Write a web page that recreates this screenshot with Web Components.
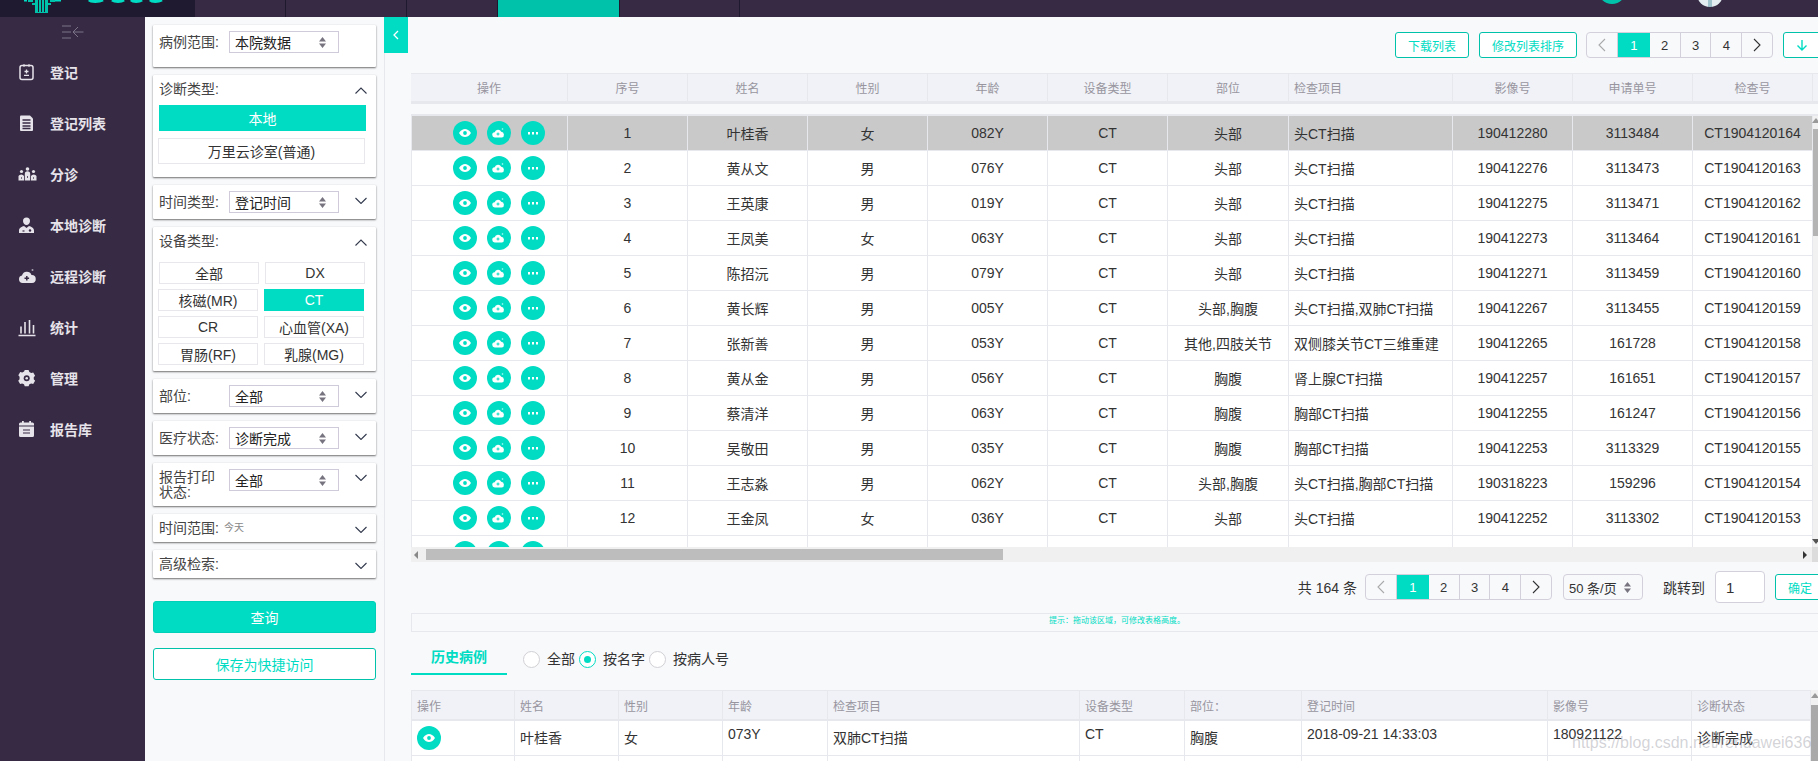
<!DOCTYPE html>
<html lang="zh">
<head>
<meta charset="utf-8">
<title>登记列表</title>
<style>
  html, body { margin: 0; height: 100%; }
  body {
    width: 1818px; height: 761px; overflow: hidden;
    font-family: "Liberation Sans", "Noto Sans CJK SC", sans-serif;
    font-size: 14px; color: #333; background: #f8f9fb;
    --teal: #00dcc3; --teal-dark: #00c2ab; --line: #e7e7ee; --purple: #372a44;
  }
  his-shell { height: 761px; }
</style>
</head>
<body>

<his-shell>
  <top-bar slot="top"></top-bar>
  <side-nav slot="nav">
    <nav-item icon="register">登记</nav-item>
    <nav-item icon="list">登记列表</nav-item>
    <nav-item icon="triage">分诊</nav-item>
    <nav-item icon="doctor">本地诊断</nav-item>
    <nav-item icon="cloud">远程诊断</nav-item>
    <nav-item icon="chart">统计</nav-item>
    <nav-item icon="gear">管理</nav-item>
    <nav-item icon="calendar">报告库</nav-item>
  </side-nav>
  <filter-panel slot="filters">
    <filter-card label="病例范围:" style="padding-bottom:8px"><pick-box slot="control">本院数据</pick-box></filter-card>
    <filter-card label="诊断类型:" chevron="up" slim>
      <div slot="body" style="display:grid;gap:7px;padding:2px 11px 13px 5px">
        <seg-btn active style="height:26px;margin-left:1px;margin-right:-1px;padding-bottom:1px">本地</seg-btn>
        <seg-btn style="height:26px;padding-bottom:1px">万里云诊室(普通)</seg-btn>
      </div>
    </filter-card>
    <filter-card label="时间类型:" chevron="down"><pick-box slot="control">登记时间</pick-box></filter-card>
    <filter-card label="设备类型:" chevron="up" slim>
      <div slot="body" style="display:grid;grid-template-columns:100px 100px;gap:5px 6px;padding:7px 0 6px 5px">
        <seg-btn style="margin:0 -1px 0 1px">全部</seg-btn>
        <seg-btn style="margin:0 -1px 0 1px">DX</seg-btn>
        <seg-btn>核磁(MR)</seg-btn>
        <seg-btn active>CT</seg-btn>
        <seg-btn>CR</seg-btn>
        <seg-btn>心血管(XA)</seg-btn>
        <seg-btn>胃肠(RF)</seg-btn>
        <seg-btn>乳腺(MG)</seg-btn>
      </div>
    </filter-card>
    <filter-card label="部位:" chevron="down"><pick-box slot="control">全部</pick-box></filter-card>
    <filter-card label="医疗状态:" chevron="down"><pick-box slot="control">诊断完成</pick-box></filter-card>
    <filter-card label="报告打印状态:" chevron="down" tall><pick-box slot="control">全部</pick-box></filter-card>
    <filter-card label="时间范围:" chevron="down" slim><span slot="control" style="font-size:10px;color:#888;line-height:22px;margin-left:-5px">今天</span></filter-card>
    <filter-card label="高级检索:" chevron="down" slim></filter-card>
    <action-btn primary style="margin-top:15px">查询</action-btn>
    <action-btn style="margin-top:7px">保存为快捷访问</action-btn>
  </filter-panel>
  <main-area slot="main">
    <tool-row style="padding-top:15px;margin-right:-3px">
      <outline-btn style="width:74px">下载列表</outline-btn>
      <outline-btn style="width:98px">修改列表排序</outline-btn>
      <page-box style="margin-left:-1px"></page-box>
      <outline-btn style="width:38px"><svg width="12" height="12" viewBox="0 0 12 12" fill="none" stroke="#00dcc3" stroke-width="1.4"><path d="M6 1v10M1.5 6.5 6 11l4.500-4.500"/></svg></outline-btn>
    </tool-row>
    <study-grid></study-grid>
    <tool-row style="margin:9px -7px 0 0;height:32px;align-items:center">
      <span style="margin-right:-2px">共 164 条</span>
      <page-box></page-box>
      <page-size style="margin-left:1px"></page-size>
      <span style="margin-left:10px">跳转到</span>
      <jump-input>1</jump-input>
      <outline-btn style="width:50px">确定</outline-btn>
    </tool-row>
    <resize-hint>提示：拖动该区域，可修改表格高度。</resize-hint>
    <history-tabs></history-tabs>
    <history-grid></history-grid>
  </main-area>
  <span slot="over" style="position:absolute;left:1572px;top:734px;font-size:16px;color:rgba(150,150,160,.42);white-space:nowrap">https://blog.csdn.net/rendawei636</span>
</his-shell>

<script>
function makeElement(name, css, html, extra) {
  const tpl = document.createElement('template');
  tpl.innerHTML = `<style>${css}</style>${html}`;
  customElements.define(name, class extends HTMLElement {
    constructor() {
      super();
      this.attachShadow({ mode: 'open' });
      this.shadowRoot.appendChild(tpl.content.cloneNode(true));
    }
    connectedCallback() {
      if (extra) extra(this, this.shadowRoot);
    }
  });
}

const ICONS = {
  register: `<rect x="2" y="2" width="13" height="14" rx="2" fill="none" stroke="currentColor" stroke-width="1.5"/><path d="M6 0.800v2.400M11 0.800v2.400M8.500 6v4M6.500 8h4M6 11.800h5" fill="none" stroke="currentColor" stroke-width="1.300"/>`,
  list: `<path d="M3 1h9l3 3v11.500a1 1 0 0 1-1 1H3a1 1 0 0 1-1-1V2a1 1 0 0 1 1-1z" fill="currentColor"/><path d="M4.500 5.500h8M4.500 8.500h8M4.500 11.500h8M4.500 14h8" stroke="#372a44" stroke-width="1.300"/>`,
  triage: `<circle cx="3.500" cy="6" r="1.600" fill="currentColor"/><circle cx="9.500" cy="3.500" r="1.800" fill="currentColor"/><circle cx="15.500" cy="6" r="1.600" fill="currentColor"/><path d="M0.500 15v-4.500a3 2.500 0 0 1 5.500 0V15zM6.800 15V8.500a2.700 2.700 0 0 1 5.400 0V15zM13 15v-4.500a3 2.500 0 0 1 5.500 0V15z" fill="currentColor"/><path d="M3.200 12.500h.8M9 11.500h1M15 12.500h.8" stroke="#372a44" stroke-width="1.500"/>`,
  doctor: `<path d="M8.500 1a3.500 3.500 0 0 1 3.500 3.500c0 2-1.500 4-3.500 4S5 6.500 5 4.500A3.500 3.500 0 0 1 8.500 1z" fill="currentColor"/><path d="M1 16.500v-2.500c0-2.500 3-4 5-4.500l2.500 2 2.500-2c2 .5 5 2 5 4.500v2.500z" fill="currentColor"/><circle cx="12" cy="14" r="1.200" fill="#372a44"/><path d="M4.500 14.500h2" stroke="#372a44" stroke-width="1.200"/>`,
  cloud: `<path d="M4.500 15.500a3.800 3.800 0 0 1-.5-7.500 5 5 0 0 1 9.500-.5 4 4 0 0 1 .5 8z" fill="currentColor"/><path d="M8.800 8.500v4.500M6.500 10.700h4.600" stroke="#372a44" stroke-width="1.500"/><circle cx="14.500" cy="2.500" r="1" fill="#a9a4b2"/>`,
  chart: `<path d="M3 15V8M7 15V3.500M11.500 15V1.500M15.500 15V6.500M0.500 17h17" fill="none" stroke="currentColor" stroke-width="1.600"/>`,
  gear: `<path d="M6.500 0.800h4l.8 2 1.900 1 2.100-.5 2 3.400-1.400 1.500v2.100l1.400 1.500-2 3.400-2.100-.5-1.900 1-.8 2h-4l-.8-2-1.900-1-2.100.5-2-3.400 1.400-1.500V7.700L-.2 6.200l2-3.400 2.100.5 1.900-1z" transform="translate(.5 -.2) scale(.96)" fill="currentColor"/><circle cx="8.700" cy="8.800" r="3" fill="#372a44"/><circle cx="8.700" cy="8.800" r="1.300" fill="currentColor"/>`,
  calendar: `<path d="M1 6h15v9a1.500 1.500 0 0 1-1.500 1.500h-12A1.500 1.500 0 0 1 1 15zM1 5V3.500A1.500 1.500 0 0 1 2.500 2H4V0.500h1.800V2h5.400V0.500H13V2h1.500A1.500 1.500 0 0 1 16 3.500V5z" fill="currentColor"/><path d="M5 9.500h7M5 12.500h7" stroke="#372a44" stroke-width="1.200"/>`
};

const UPDOWN = `<svg width="7" height="11" viewBox="0 0 7 11" fill="#77737f"><path d="M3.500 0 7 4.400H0zM3.500 11 0 6.600h7z"/></svg>`;
const EYE = `<svg width="12" height="8" viewBox="0 0 12 8"><path d="M0 4C2 1 4 0 6 0s4 1 6 4c-2 3-4 4-6 4S2 7 0 4z" fill="#fff"/><circle cx="6" cy="4" r="1.900" fill="#00dcc3"/></svg>`;
const CLOUD = `<svg width="13" height="10" viewBox="0 0 13 10"><path d="M3 9.500a2.600 2.600 0 0 1-.3-5.200 3.500 3.500 0 0 1 6.500-.5 2.900 2.900 0 0 1 .6 5.700z" fill="#fff"/><path d="M6 4.500v3M4.500 6h3" stroke="#00dcc3" stroke-width="1"/><circle cx="10.500" cy="1" r=".8" fill="#bff"/></svg>`;
const DOTS = `<svg width="10" height="3" viewBox="0 0 10 3" fill="#fff"><rect width="2" height="2.500"/><rect x="4" width="2" height="2.500"/><rect x="8" width="2" height="2.500"/></svg>`;

makeElement('his-shell', `
  :host { display: grid; grid-template: 17px 744px / 145px 240px 1433px; position: relative; overflow: hidden; }
  ::slotted([slot=top]) { grid-column: 1 / -1; }
`, `<slot name="top"></slot><slot name="nav"></slot><slot name="filters"></slot><slot name="main"></slot><slot name="over"></slot>`);

makeElement('top-bar', `
  :host { display: flex; height: 17px; background: var(--purple); position: relative; overflow: hidden; }
  .logo { width: 195px; background: #201a30; flex: none; }
  .seg { flex: none; box-sizing: border-box; border-right: 1px solid #1f1930; }
  .on { background: var(--teal-dark); border: 0; }
  .logo svg { display: block; }
  .badge { position: absolute; left: 1598px; top: -24px; width: 28px; height: 28px; border-radius: 50%; background: var(--teal-dark); }
  .avatar { position: absolute; left: 1697px; top: -19px; width: 26px; height: 26px; border-radius: 50%;
    background: linear-gradient(90deg, #e3edf1 0 44%, #9fc4cd 44% 56%, #e3edf1 56%); }
`, `
  <div class="logo"><svg width="195" height="17" viewBox="0 0 195 17" aria-hidden="true">
    <g fill="#00c2ab"><rect x="35" y="0" width="13" height="13"/><rect x="28" y="0" width="5" height="2"/><rect x="50" y="0" width="5" height="2"/><rect x="32" y="3" width="3" height="2"/><rect x="48" y="3" width="3" height="2"/></g>
    <path d="M38.500 0v12M41.500 0v12M44.500 0v12" stroke="#201a30" stroke-width="1"/>
    <g fill="#00dcc3"><rect x="55" y="0" width="6" height="1.500"/><rect x="24" y="0" width="3" height="1.500"/></g>
    <path d="M89 0c2 2 10 2 14 0M112 0c3 2 9 2 12 0M131 0c2 2 8 2 11 0M150 0c2 2 8 2 12 0" fill="none" stroke="#00dcc3" stroke-width="3"/>
  </svg></div>
  <div class="seg" style="width:91px"></div>
  <div class="seg" style="width:121px"></div>
  <div class="seg" style="width:91px"></div>
  <div class="seg on" style="width:121px"></div>
  <div class="seg" style="width:121px;border-left:1px solid #1f1930"></div>
  <div class="badge"></div><div class="avatar"></div>
`);

makeElement('side-nav', `
  :host { display: block; background: var(--purple); }
  .fold { height: 29.500px; display: flex; justify-content: center; align-items: center; padding-left: 0; color: #7c7487; }
`, `
  <div class="fold"><svg width="22" height="14" viewBox="0 0 22 14" fill="none" stroke="currentColor" stroke-width="1"><path d="M0 1h9M0 7h9M0 13h9M21.500 7H11M16 2l-5 5 5 5"/></svg></div>
  <slot></slot>
`);

makeElement('nav-item', `
  :host { display: flex; align-items: center; height: 51px; padding-left: 18px; color: #e6e3ea; font-size: 14px; font-weight: 700; }
  svg { width: 19px; height: 19px; flex: none; margin-right: 13px; color: #e6e3ea; }
`, `<svg viewBox="0 0 19 18"></svg><slot></slot>`, (el, root) => {
  root.querySelector('svg').innerHTML = ICONS[el.getAttribute('icon')] || '';
});

makeElement('filter-panel', `
  :host { display: flex; flex-direction: column; gap: 8px; position: relative; box-sizing: border-box;
    padding: 8px 8px 0; border-right: 1px solid var(--line); background: #f8f9fb; }
  .toggle { position: absolute; left: 239px; top: 0; width: 24px; height: 36px; background: var(--teal);
    display: flex; align-items: center; justify-content: center; z-index: 2; }
`, `
  <slot></slot>
  <div class="toggle"><svg width="6" height="10" viewBox="0 0 6 10" fill="none" stroke="#fff" stroke-width="1.300"><path d="M5 1 1 5l4 4"/></svg></div>
`);

makeElement('filter-card', `
  :host { display: block; background: #fff; box-shadow: 0 1px 2px rgba(0,0,0,.55), 0 0 1px rgba(0,0,0,.08); border-radius: 1px; }
  .head { display: flex; align-items: flex-start; padding: 6px 9px 6px 6px; }
  .label { width: 70px; flex: none; line-height: 15px; padding: 4px 8px 3px 0; box-sizing: border-box; color: #444; }
  .chev { margin: 5.500px 0 0 auto; flex: none; }
  :host([slim]) .head { padding-top: 3px; padding-bottom: 3px; }
  :host([slim]) .chev { margin-top: 8.500px; }
  :host([tall]) .label { padding: 1px 8px 0 0; }
  :host([tall]) .chev { margin-top: 4.500px; }
`, `
  <div class="head"><span class="label"></span><slot name="control"></slot><span class="chev"></span></div>
  <slot name="body"></slot>
`, (el, root) => {
  root.querySelector('.label').textContent = el.getAttribute('label');
  const dir = el.getAttribute('chevron');
  if (dir) {
    const d = dir === 'up' ? 'M.500 6.500 6 1l5.500 5.500' : 'M.500 1 6 6.500 11.500 1';
    root.querySelector('.chev').innerHTML = `<svg width="12" height="7" viewBox="0 0 12 7" fill="none" stroke="#333a4d" stroke-width="1.100" style="display:block"><path d="${d}"/></svg>`;
  }
});

makeElement('pick-box', `
  :host { display: flex; align-items: center; justify-content: space-between; box-sizing: border-box; width: 110px; height: 22px;
    border: 1px solid #cfcbda; padding: 0 12px 0 5px; background: #fff; color: #222; }
  svg { display: block; }
`, `<span><slot></slot></span>${UPDOWN}`);

makeElement('seg-btn', `
  :host { display: flex; align-items: center; justify-content: center; box-sizing: border-box; height: 22px;
    border: 1px solid #e8e8ec; background: #fff; color: #333; }
  :host([active]) { background: var(--teal); border-color: var(--teal); color: #fff; }
`, `<slot></slot>`);

makeElement('action-btn', `
  :host { display: flex; align-items: center; justify-content: center; box-sizing: border-box; height: 32px;
    border: 1px solid var(--teal-dark); border-radius: 3px; background: #fff; color: var(--teal); }
  :host([primary]) { background: var(--teal); color: #fff; border-color: #00d0b8; }
`, `<slot></slot>`);

makeElement('main-area', `
  :host { display: block; overflow: hidden; padding-left: 26px; background: #f8f9fb; min-width: 0; }
`, `<slot></slot>`);

makeElement('tool-row', `
  :host { display: flex; justify-content: flex-end; gap: 10px; }
`, `<slot></slot>`);

makeElement('outline-btn', `
  :host { display: flex; align-items: center; justify-content: center; box-sizing: border-box; height: 26px; flex: none;
    border: 1px solid var(--teal-dark); border-radius: 3px; background: #fff; color: var(--teal); font-size: 12px; }
`, `<slot></slot>`);

makeElement('page-box', `
  :host { display: flex; box-sizing: border-box; width: 187px; height: 26px; border: 1px solid #d3d0dc; border-radius: 4px; flex: none; overflow: hidden; background: #f8f9fb; }
  div { flex: 1 1 0; display: flex; align-items: center; justify-content: center; border-right: 1px solid #d3d0dc; color: #333; font-size: 13px; }
  div:last-child { border-right: 0; }
  .on { background: var(--teal); color: #fff; border-right: 0; flex: none; width: 32px; }
`, `
  <div><svg width="8" height="14" viewBox="0 0 8 14" fill="none" stroke="#aaa" stroke-width="1.100"><path d="M7 1 1 7l6 6"/></svg></div>
  <div class="on">1</div><div>2</div><div>3</div><div>4</div>
  <div><svg width="8" height="14" viewBox="0 0 8 14" fill="none" stroke="#333" stroke-width="1.100"><path d="M1 1l6 6-6 6"/></svg></div>
`);

makeElement('page-size', `
  :host { display: flex; align-items: center; justify-content: space-between; box-sizing: border-box; width: 80px; height: 26px; flex: none;
    border: 1px solid #d3d0dc; border-radius: 4px; padding: 0 11px 0 5px; font-size: 13px; color: #333; }
`, `<span>50 条/页</span>${UPDOWN}`);

makeElement('jump-input', `
  :host { display: flex; align-items: center; box-sizing: border-box; width: 50px; height: 32px; flex: none;
    border: 1px solid #d3d0dc; border-radius: 4px; background: #fff; padding-left: 10px; font-size: 15px; color: #333; }
`, `<slot></slot>`);

makeElement('resize-hint', `
  :host { display: block; box-sizing: border-box; height: 19px; margin-top: 10px; padding: 1px 0 0 4px; text-align: center;
    border: solid var(--line); border-width: 1px 0 1px 1px; color: var(--teal); font-size: 8px; line-height: 11px; }
`, `<slot></slot>`);

makeElement('history-tabs', `
  :host { display: flex; align-items: flex-start; height: 43px; }
  .tab { box-sizing: border-box; width: 96px; height: 43px; padding-top: 16px; text-align: center; color: var(--teal);
    font-weight: 700; border-bottom: 2px solid var(--teal); margin-right: 16px; line-height: 18px; flex: none; }
  .opt { display: flex; align-items: center; gap: 7px; margin: 18px 4px 0 0; color: #333; line-height: 18px; }
  .dot { box-sizing: border-box; width: 17px; height: 17px; border-radius: 50%; border: 1px solid #d0d0d6; background: #fff; flex: none; }
  .on { border-color: var(--teal); display: flex; align-items: center; justify-content: center; }
  .on::after { content: ""; width: 7px; height: 7px; border-radius: 50%; background: var(--teal); }
`, `
  <div class="tab">历史病例</div>
  <div class="opt"><span class="dot"></span><span>全部</span></div>
  <div class="opt"><span class="dot on"></span><span>按名字</span></div>
  <div class="opt"><span class="dot"></span><span>按病人号</span></div>
`);

const GRID_CSS = `
  .hd, .row { display: grid; grid-template-columns: var(--cols); }
  .hd > div, .row > div { box-sizing: border-box; display: flex; border-right: 1px solid var(--line); }
  .hd { background: #f0f2f7; color: #98959f; font-size: 12px; }
  .row { background: #fff; color: #333; }
  .l { justify-content: flex-start !important; padding-left: 5px; }
  .first { border-left: 1px solid var(--line); }
  .op { display: inline-flex; align-items: center; justify-content: center; width: 24px; height: 24px; border-radius: 50%; background: var(--teal); flex: none; }
  .arrow { width: 0; height: 0; border: 4px solid transparent; position: absolute; }
`;

const STUDIES = [
  ['1','叶桂香','女','082Y','CT','头部','头CT扫描','190412280','3113484','CT1904120164'],
  ['2','黄从文','男','076Y','CT','头部','头CT扫描','190412276','3113473','CT1904120163'],
  ['3','王英康','男','019Y','CT','头部','头CT扫描','190412275','3113471','CT1904120162'],
  ['4','王凤美','女','063Y','CT','头部','头CT扫描','190412273','3113464','CT1904120161'],
  ['5','陈招沅','男','079Y','CT','头部','头CT扫描','190412271','3113459','CT1904120160'],
  ['6','黄长辉','男','005Y','CT','头部,胸腹','头CT扫描,双肺CT扫描','190412267','3113455','CT1904120159'],
  ['7','张新善','男','053Y','CT','其他,四肢关节','双侧膝关节CT三维重建','190412265','161728','CT1904120158'],
  ['8','黄从金','男','056Y','CT','胸腹','肾上腺CT扫描','190412257','161651','CT1904120157'],
  ['9','蔡清洋','男','063Y','CT','胸腹','胸部CT扫描','190412255','161247','CT1904120156'],
  ['10','吴敬田','男','035Y','CT','胸腹','胸部CT扫描','190412253','3113329','CT1904120155'],
  ['11','王志淼','男','062Y','CT','头部,胸腹','头CT扫描,胸部CT扫描','190318223','159296','CT1904120154'],
  ['12','王金凤','女','036Y','CT','头部','头CT扫描','190412252','3113302','CT1904120153'],
  ['','','','','','','','','','']
];
const STUDY_HEAD = ['操作','序号','姓名','性别','年龄','设备类型','部位','检查项目','影像号','申请单号','检查号'];

makeElement('study-grid', GRID_CSS + `
  :host { display: block; --cols: 157px 120px 120px 120px 120px 120px 121px 164px 120px 120px 120px; margin-top: 15px; }
  .hd { height: 31px; border: solid var(--line); border-width: 1px 0 3px; box-sizing: border-box; position: relative; }
  .hd > div { align-items: center; justify-content: center; }
  .wrap { display: flex; height: 433px; margin-top: 10px; overflow: hidden; border-top: 2px solid var(--line); box-sizing: border-box; }
  .rows { width: 1402px; flex: none; overflow: hidden; }
  .row { height: 35px; }
  .row > div { align-items: center; justify-content: center; border-bottom: 1px solid var(--line); }
  .row.sel { background: #c9c9c9; }
  .ops { gap: 10px; padding-left: 18px; }
  .v { flex: 1; background: #f1f1f1; position: relative; }
  .v .up { left: -1px; top: 2px; border-bottom: 5px solid #999; border-top: 0; }
  .v .dn { left: -1px; bottom: 3px; border-top: 5px solid #555; border-bottom: 0; }
  .v .thumb { position: absolute; inset: 13px 0 auto 0; height: 107px; background: #b4b4b4; }
  .h { height: 15px; background: #f0f0f0; position: relative; }
  .h .thumb { position: absolute; left: 15px; top: 2px; width: 577px; height: 11px; background: #bdbdbd; }
  .h .lf { left: 3px; top: 3.500px; border-right: 4px solid #888; border-left: 0; }
  .h .rt { right: 11px; top: 3.500px; border-left: 4px solid #333; border-right: 0; }
  .h .corner { position: absolute; right: 0; top: 0; width: 6px; height: 15px; background: #dcdcdc; }
`, `
  <div class="hd"></div>
  <div class="wrap"><div class="rows"></div><div class="v"><i class="arrow up"></i><i class="thumb"></i><i class="arrow dn"></i></div></div>
  <div class="h"><i class="arrow lf"></i><i class="thumb"></i><i class="arrow rt"></i><i class="corner"></i></div>
`, (el, root) => {
  root.querySelector('.hd').innerHTML = STUDY_HEAD.map((t, i) =>
    `<div class="${i === 7 ? 'l' : ''}">${t}</div>`).join('');
  root.querySelector('.rows').innerHTML = STUDIES.map((r, i) => `
    <div class="row${i === 0 ? ' sel' : ''}">
      <div class="first ops"><span class="op">${EYE}</span><span class="op">${CLOUD}</span><span class="op">${DOTS}</span></div>
      ${r.map((t, c) => `<div class="${c === 6 ? 'l' : ''}">${t}</div>`).join('')}
    </div>`).join('');
});

const HISTORY_HEAD = ['操作','姓名','性别','年龄','检查项目','设备类型','部位：','登记时间','影像号','诊断状态'];
const HISTORY_ROW = ['叶桂香','女','073Y','双肺CT扫描','CT','胸腹','2018-09-21 14:33:03','180921122','诊断完成'];

makeElement('history-grid', GRID_CSS + `
  :host { display: flex; --cols: 104px 104px 104px 105px 252px 105px 117px 246px 144px 119px; margin-top: 15px; height: 71px; overflow: hidden; }
  .tbl { width: 1400px; flex: none; }
  .hd { height: 31px; border-top: 1px solid var(--line); border-bottom: 2px solid var(--line); box-sizing: border-box; }
  .hd > div { align-items: center; padding-left: 5px; }
  .row { height: 35px; }
  .row > div { align-items: flex-start; padding: 5px 0 0 5px; border-bottom: 1px solid var(--line); }
  .row > div.zh { padding-top: 6px; }
  .row > div.ic { padding-top: 5px; }
  .v { flex: 1; background: #f1f1f1; position: relative; }
  .v .up { left: 0; top: 3px; border-bottom: 5px solid #999; border-top: 0; }
  .v .thumb { position: absolute; inset: 15px 0 0 0; background: #a9a9a9; }
`, `
  <div class="tbl"><div class="hd"></div><div class="row"></div><div class="row"></div></div>
  <div class="v"><i class="arrow up"></i><i class="thumb"></i></div>
`, (el, root) => {
  root.querySelector('.hd').innerHTML = HISTORY_HEAD.map((t, i) =>
    `<div class="${i === 0 ? 'first' : ''}">${t}</div>`).join('');
  const rows = root.querySelectorAll('.row');
  rows[0].innerHTML = `<div class="first ic"><span class="op">${EYE}</span></div>` +
    HISTORY_ROW.map(t => `<div class="${/[\u4e00-\u9fff]/.test(t) ? 'zh' : ''}">${t}</div>`).join('');
  rows[1].innerHTML = `<div class="first"></div>` + HISTORY_ROW.map(() => `<div></div>`).join('');
});
</script>
</body>
</html>
